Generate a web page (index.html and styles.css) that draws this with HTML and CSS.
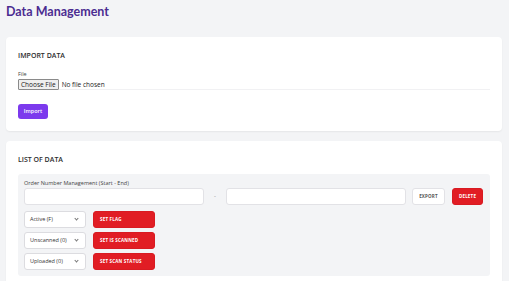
FILE: index.html
```html
<!DOCTYPE html>
<html lang="en">
<head>
  <meta charset="UTF-8">
  <title>Data Management</title>
  <link rel="stylesheet" href="styles.css">
</head>
<body>
  <h1 class="page-title">Data Management</h1>

  <!-- import -->
  <section class="card">
    <h2 class="card-title">IMPORT DATA</h2>
    <label class="field-label">File</label>
    <div class="file-row">
      <span class="file-btn">Choose File</span>
      <span class="file-name">No file chosen</span>
    </div>
    <button class="btn-import">Import</button>
  </section>

  <!-- list -->
  <section class="card">
    <h2 class="card-title">LIST OF DATA</h2>
    <div class="panel">
      <label class="field-label small">Order Number Management (Start - End)</label>
      <div class="range-row">
        <input class="text-input" type="text">
        <span class="dash">-</span>
        <input class="text-input" type="text">
        <button class="btn btn-light">EXPORT</button>
        <button class="btn btn-red">DELETE</button>
      </div>
      <div class="action-row">
        <div class="select">Active (F)<span class="chev"></span></div>
        <button class="btn btn-red btn-wide">SET FLAG</button>
      </div>
      <div class="action-row">
        <div class="select">Unscanned (0)<span class="chev"></span></div>
        <button class="btn btn-red btn-wide">SET IS SCANNED</button>
      </div>
      <div class="action-row">
        <div class="select">Uploaded (0)<span class="chev"></span></div>
        <button class="btn btn-red btn-wide">SET SCAN STATUS</button>
      </div>
    </div>
  </section>
</body>
</html>
```

FILE: styles.css
```css
* {
  margin: 0;
  padding: 0;
  box-sizing: border-box;
}
body {
  font-family: 'Open Sans', 'Noto Sans', sans-serif;
  background: #f3f4f6;
  color: #333;
  padding: 4px 7px 0 6px;
  overflow: hidden;
}

.page-title {
  font-family: 'Lato', 'Open Sans', sans-serif;
  font-size: 12.5px;
  font-weight: 700;
  color: #4b2c91;
  line-height: 16px;
  margin-bottom: 17px;
}

/* cards */
.card {
  background: #fff;
  border-radius: 4px;
  box-shadow: 0 1px 2px rgba(0,0,0,0.06);
  padding: 12px;
  margin-bottom: 10px;
}
.card-title {
  font-size: 7px;
  font-weight: 600;
  color: #2d2d2d;
  line-height: 10px;
  margin: 2px 0 9px;
}
.field-label {
  display: block;
  font-size: 5.5px;
  color: #444;
  line-height: 8px;
}
.file-row {
  display: flex;
  align-items: center;
  height: 11px;
  margin-top: 1px;
  border-bottom: 1px solid #f1f1f3;
  margin-bottom: 6px;
}
.file-btn {
  font-size: 6.5px;
  color: #222;
  background: #efefef;
  border: 1px solid #8a8a8a;
  border-radius: 1px;
  padding: 0 2px;
  line-height: 9px;
}
.file-name {
  font-size: 6.5px;
  color: #222;
  margin-left: 3px;
}
.btn-import {
  font-family: inherit;
  background: #7c3aed;
  color: #fff;
  border: none;
  border-radius: 3px;
  font-size: 5.5px;
  font-weight: 600;
  width: 30px;
  height: 15px;
}

/* list panel */
.panel {
  background: #f3f4f6;
  border-radius: 3px;
  padding: 5px 6px 6px;
}
.field-label.small {
  font-size: 5.5px;
  line-height: 9px;
}
.range-row {
  display: flex;
  align-items: center;
  margin-bottom: 6px;
}
.text-input {
  width: 180px;
  height: 17px;
  border: 1px solid #e2e2e6;
  border-radius: 3px;
  background: #fff;
}
.dash {
  width: 22px;
  text-align: center;
  font-size: 6px;
  color: #888;
}
.btn {
  font-family: inherit;
  font-size: 4.5px;
  font-weight: 700;
  letter-spacing: 0.2px;
  height: 17px;
  border-radius: 3px;
  border: 1px solid #e2e2e6;
}
.btn-light {
  background: #fff;
  color: #555;
  width: 33px;
  margin-left: 6px;
}
.btn-red {
  background: #e11d24;
  color: #fff;
  border-color: #d81b22;
  width: 31px;
  margin-left: 7px;
}
.action-row {
  display: flex;
  align-items: center;
  margin-bottom: 4px;
}
.action-row:last-child {
  margin-bottom: 0;
}
.select {
  width: 62px;
  height: 17px;
  background: #fff;
  border: 1px solid #dcdce0;
  border-radius: 3px;
  font-size: 5.5px;
  color: #333;
  display: flex;
  align-items: center;
  justify-content: space-between;
  padding: 0 7px 0 5px;
}
.chev {
  width: 3px;
  height: 3px;
  border-right: 1px solid #777;
  border-bottom: 1px solid #777;
  transform: rotate(45deg);
  margin-top: -2px;
}
.btn-wide {
  width: 62px;
  margin-left: 7px;
  text-align: left;
  padding-left: 6px;
}
```
